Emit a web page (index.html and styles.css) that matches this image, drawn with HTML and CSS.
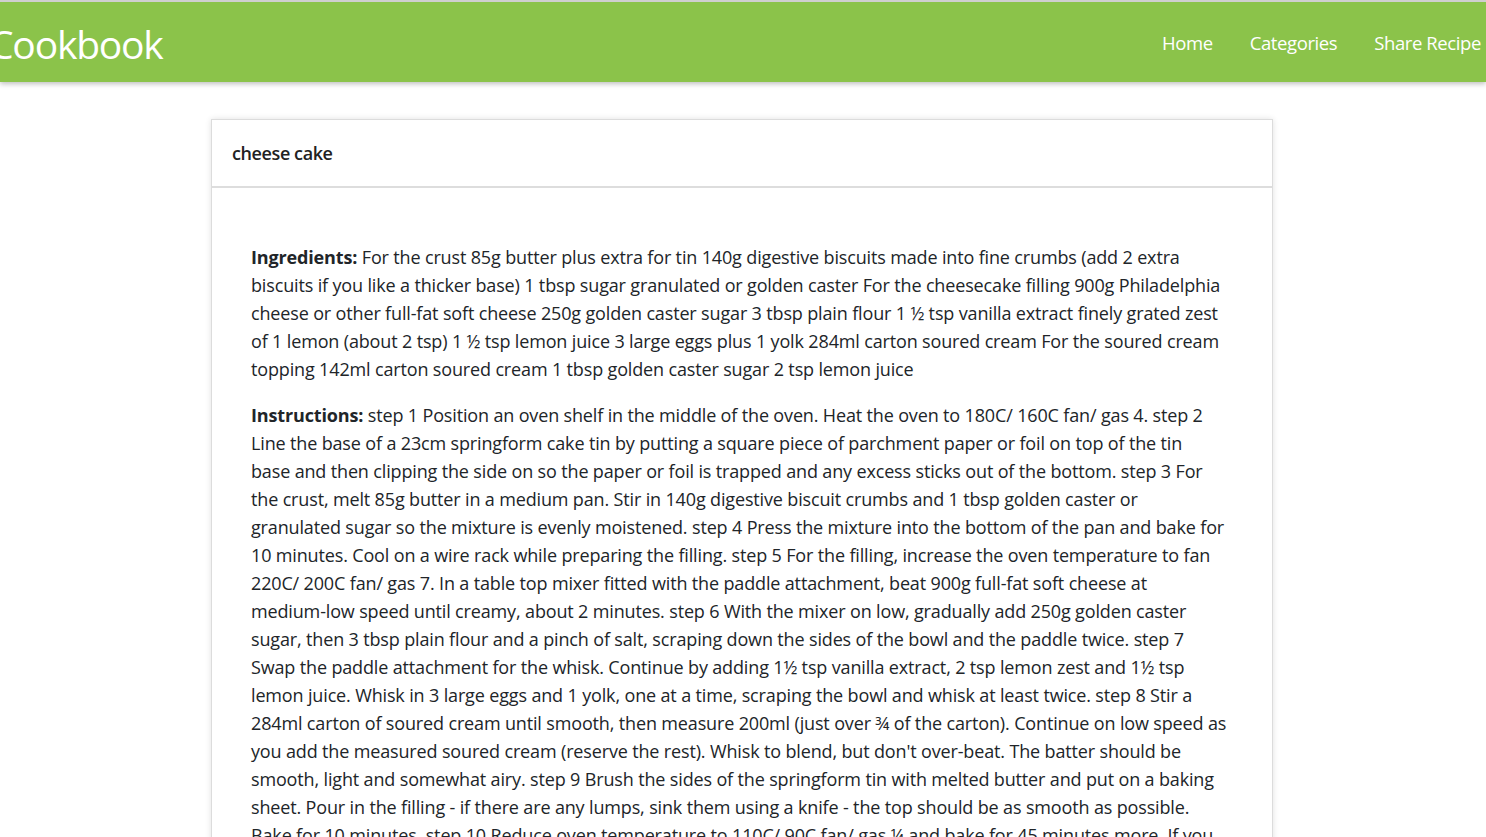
FILE: index.html
```html
<!DOCTYPE html>
<html lang="en">
<head>
<meta charset="utf-8">
<title>Cookbook</title>
<link rel="stylesheet" href="styles.css">
</head>
<body>
<header class="navbar">
  <a class="brand" href="#">Cookbook</a>
  <nav class="nav">
    <a href="#">Home</a>
    <a href="#">Categories</a>
    <a href="#">Share Recipe</a>
  </nav>
</header>
<main class="container">
  <section class="card">
    <div class="card-header">cheese cake</div>
    <div class="card-body">
      <p><strong>Ingredients:</strong> For the crust 85g butter plus extra for tin 140g digestive biscuits made into fine crumbs (add 2 extra biscuits if you like a thicker base) 1 tbsp sugar granulated or golden caster For the cheesecake filling 900g Philadelphia cheese or other full-fat soft cheese 250g golden caster sugar 3 tbsp plain flour 1 ½ tsp vanilla extract finely grated zest of 1 lemon (about 2 tsp) 1 ½ tsp lemon juice 3 large eggs plus 1 yolk 284ml carton soured cream For the soured cream topping 142ml carton soured cream 1 tbsp golden caster sugar 2 tsp lemon juice</p>
      <p><strong>Instructions:</strong> step 1 Position an oven shelf in the middle of the oven. Heat the oven to 180C/ 160C fan/ gas 4. step 2<br>Line the base of a 23cm springform cake tin by putting a square piece of parchment paper or foil on top of the tin<br>base and then clipping the side on so the paper or foil is trapped and any excess sticks out of the bottom. step 3 For<br>the crust, melt 85g butter in a medium pan. Stir in 140g digestive biscuit crumbs and 1 tbsp golden caster or<br>granulated sugar so the mixture is evenly moistened. step 4 Press the mixture into the bottom of the pan and bake for<br>10 minutes. Cool on a wire rack while preparing the filling. step 5 For the filling, increase the oven temperature to fan<br>220C/ 200C fan/ gas 7. In a table top mixer fitted with the paddle attachment, beat 900g full-fat soft cheese at<br>medium-low speed until creamy, about 2 minutes. step 6 With the mixer on low, gradually add 250g golden caster<br>sugar, then 3 tbsp plain flour and a pinch of salt, scraping down the sides of the bowl and the paddle twice. step 7<br>Swap the paddle attachment for the whisk. Continue by adding 1½ tsp vanilla extract, 2 tsp lemon zest and 1½ tsp<br>lemon juice. Whisk in 3 large eggs and 1 yolk, one at a time, scraping the bowl and whisk at least twice. step 8 Stir a<br>284ml carton of soured cream until smooth, then measure 200ml (just over ¾ of the carton). Continue on low speed as<br>you add the measured soured cream (reserve the rest). Whisk to blend, but don't over-beat. The batter should be<br>smooth, light and somewhat airy. step 9 Brush the sides of the springform tin with melted butter and put on a baking<br>sheet. Pour in the filling - if there are any lumps, sink them using a knife - the top should be as smooth as possible.<br>Bake for 10 minutes. step 10 Reduce oven temperature to 110C/ 90C fan/ gas ¼ and bake for 45 minutes more. If you<br>gently shake the tin, the filling should have a slight wobble. Turn off the oven and open the oven door for a cheesecake that's creamy in the centre, or leave it closed if you prefer a drier texture. Let cool in the oven for 2 hours. The cheesecake may get a slight crack on top as it cools.</p>
    </div>
  </section>
</main>
</body>
</html>
```
FILE: styles.css
```css
html, body {
  margin: 0;
  padding: 0;
  background: #ffffff;
  font-family: "Open Sans", "Noto Sans", sans-serif;
  color: #212529;
}

.navbar {
  display: flex;
  align-items: center;
  justify-content: space-between;
  height: 80px;
  border-top: 2px solid #cfcfcf;
  background: #8bc34a;
  box-shadow: 0 2px 5px rgba(0, 0, 0, 0.25);
  padding: 0 5px 0 0;
  overflow: hidden;
}

.brand {
  margin-left: -11px;
  margin-top: 2px;
  color: #ffffff;
  text-decoration: none;
  font-size: 39px;
  line-height: 1;
  letter-spacing: -1.2px;
}

.nav {
  display: flex;
  gap: 37px;
}

.nav a {
  color: #ffffff;
  text-decoration: none;
  font-size: 18.5px;
  letter-spacing: -0.4px;
}

.container {
  display: flex;
  justify-content: center;
  padding-top: 37px;
  padding-right: 2px;
}

.card {
  width: 1060px;
  border: 1px solid #dcdcdc;
  box-shadow: 0 0 6px rgba(0, 0, 0, 0.12);
  background: #fff;
}

.card-header {
  padding: 0 20px;
  height: 66px;
  display: flex;
  align-items: center;
  border-bottom: 2px solid #dddddd;
  font-size: 18px;
  font-weight: 600;
  color: #222;
  letter-spacing: -0.4px;
}

.card-body {
  padding: 37px 39px;
}

.card-body p {
  margin: 18px 0;
  font-size: 18px;
  line-height: 28px;
  letter-spacing: -0.15px;
}

.card-body strong {
  font-weight: 700;
}
```
